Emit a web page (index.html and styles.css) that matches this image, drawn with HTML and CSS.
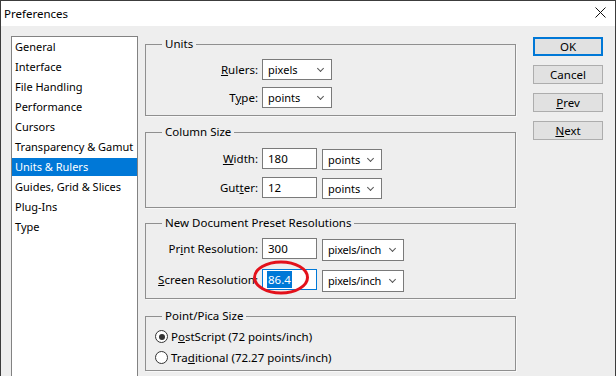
FILE: index.html
```html
<!DOCTYPE html>
<html lang="en">
<head>
    <meta charset="UTF-8">
    <title>Preferences</title>
    <link rel="stylesheet" href="styles.css">
</head>
<body>

    <div class="window">
        <div class="titlebar">
            <span class="title">Preferences</span>
            <svg class="close" width="11" height="11" viewBox="0 0 11 11">
                <path d="M0.5 0.5 L10.5 10.5 M10.5 0.5 L0.5 10.5" stroke="#111" stroke-width="1" fill="none"/>
            </svg>
        </div>

        <div class="client">
            <!-- category list -->
            <ul class="list">
                <li>General</li>
                <li>Interface</li>
                <li>File Handling</li>
                <li>Performance</li>
                <li>Cursors</li>
                <li>Transparency &amp; Gamut</li>
                <li class="selected">Units &amp; Rulers</li>
                <li>Guides, Grid &amp; Slices</li>
                <li>Plug-Ins</li>
                <li>Type</li>
            </ul>

            <div class="panel">
                <fieldset class="group units">
                    <legend>Units</legend>
                    <div class="rows">
                        <label><u>R</u>ulers:</label>
                        <div class="combo w70">pixels</div>
                        <span></span>
                        <label>T<u>y</u>pe:</label>
                        <div class="combo w70">points</div>
                        <span></span>
                    </div>
                </fieldset>

                <fieldset class="group columns">
                    <legend>Column Size</legend>
                    <div class="rows">
                        <label><u>W</u>idth:</label>
                        <div class="field">180</div>
                        <div class="combo w60 low">points</div>
                        <label>Gut<u>t</u>er:</label>
                        <div class="field">12</div>
                        <div class="combo w60 low">points</div>
                    </div>
                </fieldset>

                <fieldset class="group resolutions">
                    <legend>New Document Preset Resolutions</legend>
                    <div class="rows">
                        <label>Pr<u>i</u>nt Resolution:</label>
                        <div class="field">300</div>
                        <div class="combo w82 low tall">pixels/inch</div>
                        <label><u>S</u>creen Resolution:</label>
                        <div class="field focused">
                            <span class="sel">86.4</span>
                            <svg class="ring" width="60" height="37" viewBox="0 0 60 37">
                                <ellipse cx="30" cy="18.5" rx="26.5" ry="15.5" fill="none" stroke="#e3111b" stroke-width="3"/>
                            </svg>
                        </div>
                        <div class="combo w82 low tall">pixels/inch</div>
                    </div>
                </fieldset>

                <fieldset class="group pica">
                    <legend>Point/Pica Size</legend>
                    <div class="radio"><span class="dot checked"></span>P<u>o</u>stScript (72 points/inch)</div>
                    <div class="radio"><span class="dot"></span>Tra<u>d</u>itional (72.27 points/inch)</div>
                </fieldset>
            </div>

            <div class="buttons">
                <div class="btn default">OK</div>
                <div class="btn">Cancel</div>
                <div class="btn"><u>P</u>rev</div>
                <div class="btn"><u>N</u>ext</div>
            </div>
        </div>
    </div>

</body>
</html>
```

FILE: styles.css
```css
body {
    margin: 0;
    padding: 0;
    font-family: 'Noto Sans', 'Liberation Sans', sans-serif;
    font-size: 11.5px;
    color: #000;
    background-color: #f0f0f0;
}

.window {
    width: 616px;
    height: 376px;
    box-sizing: border-box;
    border-left: 1px solid #3c3c3c;
    border-right: 1px solid #3c3c3c;
    border-top: 1px solid #3c3c3c;
    background-color: #eeeeee;
    overflow: hidden;
}

.titlebar {
    height: 25px;
    background-color: #fff;
    display: flex;
    align-items: center;
    justify-content: space-between;
    padding: 0 9px 0 3px;
}

.title {
    font-size: 11.5px;
    margin-top: -1px;
}

.close {
    display: block;
    margin-top: -2px;
}

.client {
    display: flex;
    align-items: flex-start;
    padding-top: 10px;
}

/* left list */
.list {
    list-style: none;
    margin: 0 0 0 10px;
    padding: 1px 0 0 0;
    width: 125px;
    height: 400px;
    background-color: #fff;
    border: 1px solid #828282;
    font-size: 11px;
}

.list li {
    height: 18px;
    line-height: 18px;
    margin-bottom: 2px;
    padding-left: 3px;
    white-space: nowrap;
}

.list li.selected {
    background-color: #0078d7;
    color: #fff;
}

/* group boxes */
.panel {
    margin-left: 7px;
    width: 371px;
    display: flex;
    flex-direction: column;
}

.group {
    margin: 0;
    padding: 7px 0 7px 0;
    border: 1px solid #8f8f8f;
    box-shadow: 1px 1px 0 #f8f8f8;
    min-width: 0;
}

.group legend {
    margin-left: 16px;
    padding: 0 3px;
    height: 16px;
    line-height: 16px;
}

.columns {
    margin-top: 8px;
    padding-top: 8px;
    padding-bottom: 8px;
}

.resolutions {
    margin-top: 7px;
    padding-bottom: 6px;
}

.resolutions .rows {
    row-gap: 8px;
}

.pica {
    margin-top: 9px;
    padding-top: 2px;
    padding-bottom: 2px;
}

.rows {
    display: grid;
    grid-template-columns: 112px auto 1fr;
    column-gap: 4px;
    row-gap: 7px;
    align-items: start;
}

.rows label {
    justify-self: end;
    white-space: nowrap;
    line-height: 21px;
}

.field {
    position: relative;
    width: 55px;
    height: 21px;
    box-sizing: border-box;
    border: 1px solid #7a7a7a;
    background-color: #fff;
    line-height: 19px;
    padding-left: 5px;
    margin-right: 1px;
}

.field.focused {
    border-color: #0078d7;
}

.sel {
    background-color: #0078d7;
    color: #fff;
    padding: 1px 1px;
    margin-left: -1px;
}

.ring {
    position: absolute;
    left: -12px;
    top: -11px;
}

.combo {
    position: relative;
    height: 21px;
    box-sizing: border-box;
    border: 1px solid #7a7a7a;
    background-color: #fff;
    line-height: 19px;
    padding-left: 5px;
    font-size: 11px;
}

.combo::after {
    content: "";
    position: absolute;
    right: 8px;
    top: 6px;
    width: 4px;
    height: 4px;
    border-right: 1px solid #555;
    border-bottom: 1px solid #555;
    transform: rotate(45deg);
}

.combo.low {
    margin-top: 1px;
}

.combo.tall {
    height: 22px;
    line-height: 20px;
    letter-spacing: -0.2px;
}

.combo.tall::after {
    top: 6px;
}

.w70 { width: 70px; }
.w60 { width: 60px; }
.w82 { width: 82px; }

/* radio buttons */
.radio {
    display: flex;
    align-items: center;
    height: 21px;
    padding-left: 9px;
}

.dot {
    width: 11px;
    height: 11px;
    border: 1px solid #333;
    border-radius: 50%;
    background-color: #fff;
    margin-right: 3px;
    position: relative;
}

.dot.checked::after {
    content: "";
    position: absolute;
    left: 2.5px;
    top: 2.5px;
    width: 6px;
    height: 6px;
    border-radius: 50%;
    background-color: #333;
}

/* buttons column */
.buttons {
    margin-left: 17px;
    margin-top: 1px;
    display: flex;
    flex-direction: column;
    gap: 9px;
}

.btn {
    width: 70px;
    height: 19px;
    box-sizing: border-box;
    border: 1px solid #adadad;
    background-color: #e1e1e1;
    text-align: center;
    line-height: 17px;
    font-size: 11.5px;
}

.btn.default {
    border: 2px solid #0078d7;
    line-height: 15px;
}
```
